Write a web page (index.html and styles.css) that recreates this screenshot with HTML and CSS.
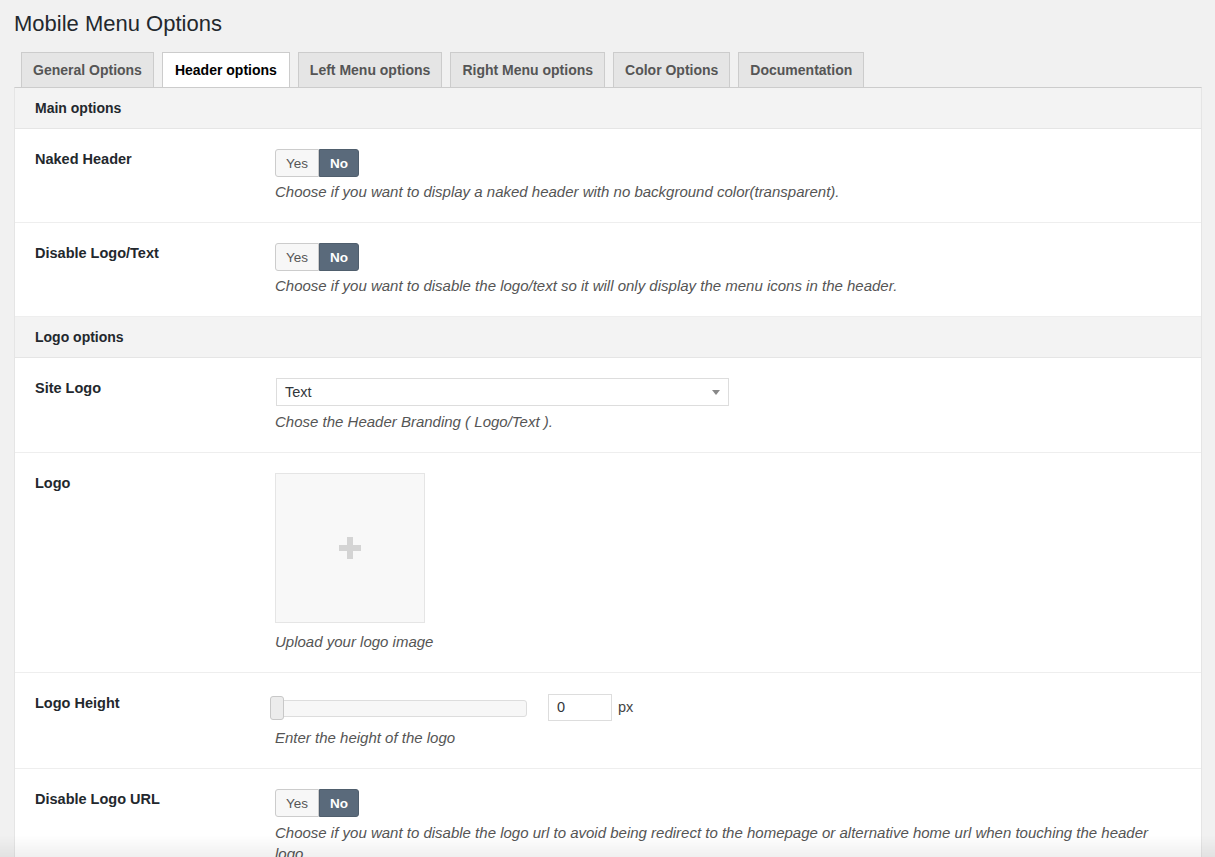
FILE: index.html
```html
<!DOCTYPE html>
<html lang="en">
<head>
    <meta charset="UTF-8">
    <meta name="viewport" content="width=device-width, initial-scale=1.0">
    <title>Mobile Menu Options</title>
    <link rel="stylesheet" href="styles.css">
</head>
<body>
<div class="wrap">

    <h1>Mobile Menu Options</h1>

    <!-- tabs -->
    <div class="nav-tabs">
        <a class="nav-tab">General Options</a>
        <a class="nav-tab active">Header options</a>
        <a class="nav-tab">Left Menu options</a>
        <a class="nav-tab">Right Menu options</a>
        <a class="nav-tab">Color Options</a>
        <a class="nav-tab">Documentation</a>
    </div>

    <div class="panel">

        <h3 class="section-title">Main options</h3>

        <div class="option-row">
            <div class="option-label">Naked Header</div>
            <div class="option-field">
                <div class="toggle">
                    <span class="toggle-yes">Yes</span>
                    <span class="toggle-no">No</span>
                </div>
                <p class="description">Choose if you want to display a naked header with no background color(transparent).</p>
            </div>
        </div>

        <div class="option-row">
            <div class="option-label">Disable Logo/Text</div>
            <div class="option-field">
                <div class="toggle">
                    <span class="toggle-yes">Yes</span>
                    <span class="toggle-no">No</span>
                </div>
                <p class="description">Choose if you want to disable the logo/text so it will only display the menu icons in the header.</p>
            </div>
        </div>

        <h3 class="section-title">Logo options</h3>

        <div class="option-row">
            <div class="option-label">Site Logo</div>
            <div class="option-field">
                <div class="select-box">
                    <span>Text</span>
                    <span class="select-arrow"></span>
                </div>
                <p class="description desc-gap">Chose the Header Branding ( Logo/Text ).</p>
            </div>
        </div>

        <div class="option-row">
            <div class="option-label">Logo</div>
            <div class="option-field">
                <div class="upload-box">
                    <svg width="22" height="22" viewBox="0 0 22 22">
                        <rect x="8" y="0" width="6" height="22" fill="#d4d4d4"/>
                        <rect x="0" y="8" width="22" height="6" fill="#d4d4d4"/>
                    </svg>
                </div>
                <p class="description upload-gap">Upload your logo image</p>
            </div>
        </div>

        <div class="option-row">
            <div class="option-label">Logo Height</div>
            <div class="option-field">
                <div class="range-line">
                    <div class="slider">
                        <span class="slider-handle"></span>
                    </div>
                    <div class="number-input">0</div>
                    <span class="unit">px</span>
                </div>
                <p class="description range-gap">Enter the height of the logo</p>
            </div>
        </div>

        <div class="option-row">
            <div class="option-label">Disable Logo URL</div>
            <div class="option-field">
                <div class="toggle">
                    <span class="toggle-yes">Yes</span>
                    <span class="toggle-no">No</span>
                </div>
                <p class="description long">Choose if you want to disable the logo url to avoid being redirect to the homepage or alternative home url when touching the header logo.</p>
            </div>
        </div>

    </div>
</div>

<div class="window-shade"></div>
</body>
</html>
```

FILE: styles.css
```css
html {
    overflow: hidden;
}

body {
    margin: 0;
    background: #f1f1f1;
    color: #23282d;
    font-family: "Liberation Sans", Arial, sans-serif;
    font-size: 14px;
}

.wrap {
    padding: 9px 13px 0 14px;
}

h1 {
    margin: 0 0 14px 0;
    font-size: 22px;
    font-weight: 400;
    line-height: 29px;
    color: #23282d;
}

/* tabs */
.nav-tabs {
    display: flex;
    gap: 8px;
    padding-left: 7px;
}

.nav-tab {
    padding: 5px 11px;
    line-height: 24px;
    border: 1px solid #ccc;
    border-bottom: 0;
    background: #e5e5e5;
    color: #555;
    font-weight: 700;
    font-size: 14px;
}

.nav-tab.active {
    background: #fff;
    color: #000;
    padding: 5px 12px;
}

/* panel */
.panel {
    background: #fff;
    border: 1px solid #e5e5e5;
    border-top-color: #ccc;
}

.section-title {
    margin: 0;
    padding: 0 20px;
    height: 40px;
    line-height: 40px;
    background: #f3f3f3;
    border-bottom: 1px solid #e5e5e5;
    font-size: 14px;
    font-weight: 700;
}

.option-row {
    display: grid;
    grid-template-columns: 240px 1fr;
    padding: 20px;
    border-bottom: 1px solid #eee;
}

.option-label {
    line-height: 20px;
    font-size: 14.5px;
    font-weight: 700;
}

.description {
    margin: 5px 0 0 0;
    line-height: 20px;
    font-size: 15px;
    color: #555;
    font-style: italic;
}

.description.long {
    line-height: 21px;
}

.desc-gap {
    margin-top: 6px;
}

.upload-gap {
    margin-top: 9px;
}

.range-gap {
    margin-top: 7px;
}

/* yes / no switch */
.toggle {
    display: inline-flex;
    height: 28px;
    font-size: 13.5px;
}

.toggle span {
    display: flex;
    align-items: center;
    padding: 0 10px;
    border: 1px solid #ccc;
}

.toggle-yes {
    background: #f7f7f7;
    color: #555;
    border-radius: 3px 0 0 3px;
}

.toggle-no {
    background: #5a6a7b;
    border-color: #4f5e6d !important;
    color: #fff;
    font-weight: 700;
    border-radius: 0 3px 3px 0;
}

/* select */
.select-box {
    display: flex;
    align-items: center;
    justify-content: space-between;
    box-sizing: border-box;
    width: 453px;
    height: 28px;
    margin-left: 1px;
    padding: 0 8px;
    border: 1px solid #ddd;
    color: #32373c;
    font-size: 14.5px;
}

.select-arrow {
    width: 0;
    height: 0;
    border-left: 4px solid transparent;
    border-right: 4px solid transparent;
    border-top: 5px solid #888;
}

/* logo upload */
.upload-box {
    display: flex;
    align-items: center;
    justify-content: center;
    box-sizing: border-box;
    width: 150px;
    height: 150px;
    background: #f8f8f8;
    border: 1px solid #e5e5e5;
}

/* slider */
.range-line {
    display: flex;
    align-items: center;
    height: 28px;
}

.slider {
    position: relative;
    box-sizing: border-box;
    width: 252px;
    height: 17px;
    margin-top: 2px;
    background: #f7f7f7;
    border: 1px solid #ddd;
    border-radius: 3px;
}

.slider-handle {
    position: absolute;
    left: -6px;
    top: -5px;
    box-sizing: border-box;
    width: 14px;
    height: 24px;
    background: #ececec;
    border: 1px solid #c8c8c8;
    border-radius: 3px;
}

.number-input {
    box-sizing: border-box;
    width: 64px;
    height: 27px;
    margin-left: 21px;
    margin-top: 1px;
    padding: 0 8px;
    line-height: 25px;
    border: 1px solid #ddd;
    color: #32373c;
    font-size: 14.5px;
}

.unit {
    margin-left: 6px;
    color: #444;
    font-size: 14.5px;
}

/* shadow of the window edge in the screenshot */
.window-shade {
    position: fixed;
    left: 0;
    right: 0;
    bottom: 0;
    height: 22px;
    background: linear-gradient(to bottom, rgba(0, 0, 0, 0), rgba(0, 0, 0, 0.06));
    pointer-events: none;
}
```
